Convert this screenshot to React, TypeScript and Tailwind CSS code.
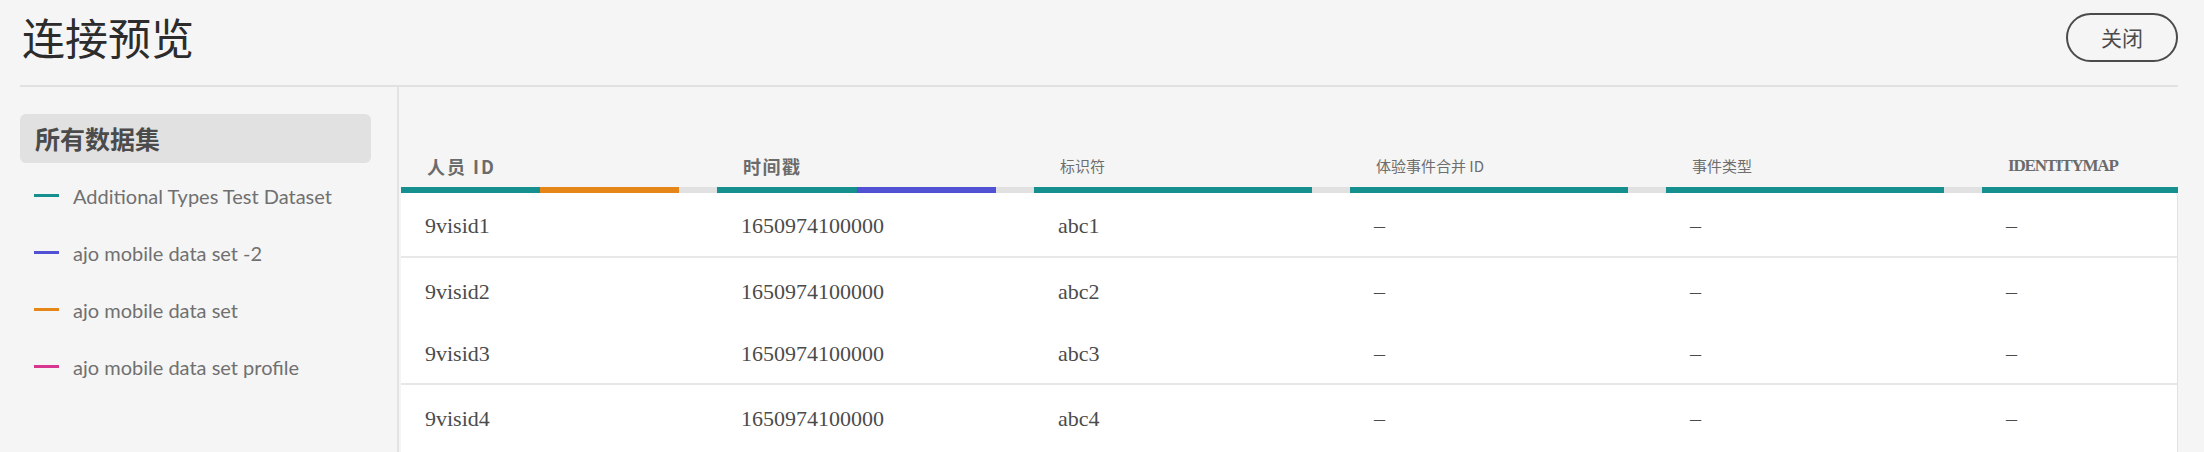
import React from "react";

const CJK = "font-['Noto_Sans_CJK_SC',sans-serif]";

const widths = [316, 317, 316, 316, 316, 196];

const TEAL = "bg-[#168f8f]";

type Seg = { w: number; c: string };

const bars: Seg[][] = [
  [
    { w: 139, c: TEAL },
    { w: 139, c: "bg-[#e68619]" },
    { w: 38, c: "bg-[#e1e1e1]" },
  ],
  [
    { w: 140, c: TEAL },
    { w: 139, c: "bg-[#5151d3]" },
    { w: 38, c: "bg-[#e1e1e1]" },
  ],
  [
    { w: 278, c: TEAL },
    { w: 38, c: "bg-[#e1e1e1]" },
  ],
  [
    { w: 278, c: TEAL },
    { w: 38, c: "bg-[#e1e1e1]" },
  ],
  [
    { w: 278, c: TEAL },
    { w: 38, c: "bg-[#e1e1e1]" },
  ],
  [{ w: 196, c: TEAL }],
];

const headers: { label: string; cls: string }[] = [
  {
    label: "人员 ID",
    cls: `${CJK} text-[18px] leading-[20px] font-bold tracking-[2px] text-[#6b6b6b]`,
  },
  {
    label: "时间戳",
    cls: `${CJK} text-[18px] leading-[20px] font-bold tracking-[1.5px] text-[#6b6b6b]`,
  },
  { label: "标识符", cls: `${CJK} text-[15px] leading-[20px] text-[#6e6e6e]` },
  { label: "体验事件合并 ID", cls: `${CJK} text-[15px] leading-[20px] text-[#6e6e6e]` },
  { label: "事件类型", cls: `${CJK} text-[15px] leading-[20px] text-[#6e6e6e]` },
  {
    label: "IDENTITYMAP",
    cls: "font-['Liberation_Serif',serif] text-[17px] leading-[20px] font-bold tracking-[-1.2px] text-[#6b6b6b]",
  },
];

const rows = [
  { id: "9visid1", ts: "1650974100000", abc: "abc1", h: "h-[65px]", border: true },
  { id: "9visid2", ts: "1650974100000", abc: "abc2", h: "h-[64px]", border: false },
  { id: "9visid3", ts: "1650974100000", abc: "abc3", h: "h-[63px]", border: true },
  { id: "9visid4", ts: "1650974100000", abc: "abc4", h: "h-[64px]", border: false },
];

const datasets = [
  { name: "Additional Types Test Dataset", c: "bg-[#168f8f]" },
  { name: "ajo mobile data set -2", c: "bg-[#5151d3]" },
  { name: "ajo mobile data set", c: "bg-[#e68619]" },
  { name: "ajo mobile data set profile", c: "bg-[#d83790]" },
];

export default function App() {
  return (
    <div className="w-[2204px] h-[452px] overflow-hidden bg-[#f5f5f5] flex flex-col">
      {/* Header */}
      <div className="h-[85px] shrink-0 flex items-start justify-between pl-[20px] pr-[26px]">
        <h1
          className={`${CJK} mt-[15px] ml-[2px] text-[43px] leading-[43px] font-normal text-[#2c2c2c]`}
        >
          连接预览
        </h1>
        <button
          className={`${CJK} mt-[13px] w-[112px] h-[49px] rounded-full border-2 border-[#4b4b4b] text-[21px] leading-none text-[#4b4b4b] flex items-center justify-center`}
        >
          关闭
        </button>
      </div>

      {/* Main */}
      <div className="flex-1 min-h-0 flex ml-[20px] mr-[26px] border-t-2 border-[#e1e1e1]">
        {/* Sidebar */}
        <div className="w-[379px] shrink-0 border-r-2 border-[#e3e3e3] pr-[26px] pt-[27px]">
          <div className="h-[49px] rounded-[6px] bg-[#e1e1e1] pl-[15px] flex items-center">
            <span className={`${CJK} text-[25px] leading-none font-bold text-[#4b4b4b]`}>
              所有数据集
            </span>
          </div>
          <div className="mt-[4px] flex flex-col">
            {datasets.map((d) => (
              <div key={d.name} className="h-[57px] flex items-center pl-[14px]">
                <span className={`w-[25px] h-[3px] ${d.c} shrink-0`} />
                <span className="ml-[14px] font-['Lato',sans-serif] text-[20px] leading-none text-[#707070]">
                  {d.name}
                </span>
              </div>
            ))}
          </div>
        </div>

        {/* Table */}
        <div className="flex-1 min-w-0 pl-[2px] flex flex-col">
          <div className="flex h-[100px] shrink-0">
            {headers.map((h, i) => (
              <div
                key={h.label}
                style={{ width: widths[i] }}
                className="shrink-0 flex items-end pb-[11px] pl-[26px]"
              >
                <span className={`${h.cls} whitespace-nowrap`}>{h.label}</span>
              </div>
            ))}
          </div>
          <div className="flex h-[6px] shrink-0">
            {bars.map((col, i) => (
              <div key={i} className="flex shrink-0" style={{ width: widths[i] }}>
                {col.map((s, j) => (
                  <div key={j} className={`${s.c} h-full shrink-0`} style={{ width: s.w }} />
                ))}
              </div>
            ))}
          </div>
          <div className="flex-1 bg-white border-r border-[#e1e1e1] rounded-tr-[4px]">
            {rows.map((r) => {
              const cells = [r.id, r.ts, r.abc, "–", "–", "–"];
              return (
                <div
                  key={r.id}
                  className={`flex ${r.h} ${r.border ? "border-b-2 border-[#e8e8e8]" : ""}`}
                >
                  {cells.map((c, i) => (
                    <div
                      key={i}
                      style={{ width: widths[i] }}
                      className="shrink-0 flex items-center pl-[24px] pt-[3px] font-['Liberation_Serif',serif] text-[22px] leading-none text-[#4b4b4b]"
                    >
                      {c}
                    </div>
                  ))}
                </div>
              );
            })}
          </div>
        </div>
      </div>
    </div>
  );
}
